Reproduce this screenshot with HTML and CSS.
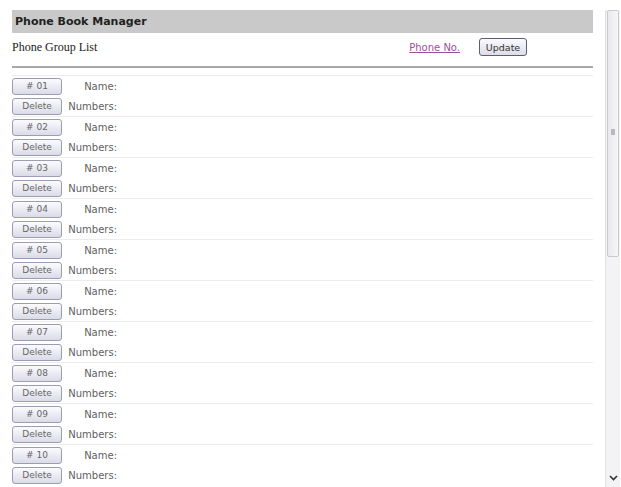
FILE: index.html
```html
<!DOCTYPE html>
<html lang="en">
<head>
    <meta charset="UTF-8">
    <title>Phone Book Manager</title>
    <link rel="stylesheet" href="styles.css">
</head>
<body>
    <div class="page">
        <div class="manager">
            <div class="title-bar">Phone Book Manager</div>

            <div class="toolbar">
                <span class="group-list">Phone Group List</span>
                <a href="#" class="phone-link">Phone No.</a>
                <button class="update-btn">Update</button>
            </div>
            <div class="rule"></div>

            <!-- Liste des groupes -->
            <div id="groups"></div>
        </div>

        <!-- fausse barre de défilement -->
        <div class="scrollbar">
            <div class="thumb"><span class="grip"></span></div>
            <svg class="arrow" width="9" height="6" viewBox="0 0 9 6">
                <path d="M1 1 L4.5 4.5 L8 1" fill="none" stroke="#333" stroke-width="1.6"/>
            </svg>
        </div>
    </div>

    <script>
        const groups = document.getElementById("groups");
        for (let i = 1; i <= 10; i++) {
            const num = i < 10 ? "0" + i : i;
            groups.innerHTML += `
                <div class="group">
                    <div class="line">
                        <button class="btn"># ${num}</button>
                        <span class="label">Name:</span>
                    </div>
                    <div class="line">
                        <button class="btn">Delete</button>
                        <span class="label">Numbers:</span>
                    </div>
                </div>
            `;
        }
    </script>
</body>
</html>
```

FILE: styles.css
```css
body {
    margin: 0;
    background: #fff;
    font-family: "DejaVu Sans", Verdana, sans-serif;
    overflow: hidden;
}

.page {
    display: flex;
    height: 487px;
    padding-top: 10px;
    box-sizing: border-box;
}

.manager {
    width: 581px;
    margin-left: 12px;
}

.title-bar {
    height: 23px;
    line-height: 24px;
    padding-left: 3px;
    background: #c9c9c9;
    font-size: 11px;
    font-weight: bold;
    color: #222;
}

.toolbar {
    display: flex;
    align-items: center;
    height: 24px;
    margin-top: 2px;
}

.group-list {
    font-family: "Liberation Serif", serif;
    font-size: 12px;
    color: #222;
}

.phone-link {
    margin-left: auto;
    font-size: 10px;
    color: #9b4e9e;
}

.update-btn {
    width: 48px;
    height: 18px;
    margin: 0 66px 0 19px;
    padding: 0;
    font-family: "DejaVu Sans", sans-serif;
    font-size: 9.5px;
    color: #333;
    background: linear-gradient(#fafafd, #dcdde8);
    border: 1px solid #5a5f78;
    border-radius: 3px;
}

.rule {
    height: 2px;
    margin-top: 7px;
    margin-bottom: 7px;
    background: #a8a8a8;
}

.group {
    border-top: 1px solid #ececec;
}

.line {
    display: flex;
    align-items: center;
    height: 20px;
}

.btn {
    width: 50px;
    height: 17px;
    padding: 0;
    font-family: "DejaVu Sans", sans-serif;
    font-size: 9px;
    color: #666;
    background: linear-gradient(#fbfbfe, #dadbe7);
    border: 1px solid #9a9db4;
    border-radius: 3px;
}

.label {
    width: 52px;
    margin-left: 3px;
    text-align: right;
    font-size: 10px;
    color: #606060;
}

.scrollbar {
    position: relative;
    width: 14px;
    margin-left: 12px;
    background: #f3f3f5;
    border-left: 1px solid #e2e2e6;
}

.thumb {
    position: relative;
    width: 10px;
    height: 245px;
    margin-left: 1px;
    background: linear-gradient(90deg, #e9e9ee, #f6f6f8);
    border: 1px solid #c9c9d2;
    border-radius: 2px;
}

.grip {
    position: absolute;
    left: 3px;
    top: 118px;
    width: 4px;
    height: 6px;
    background: #b8b8c0;
}

.arrow {
    position: absolute;
    left: 3px;
    bottom: 6px;
}
```
